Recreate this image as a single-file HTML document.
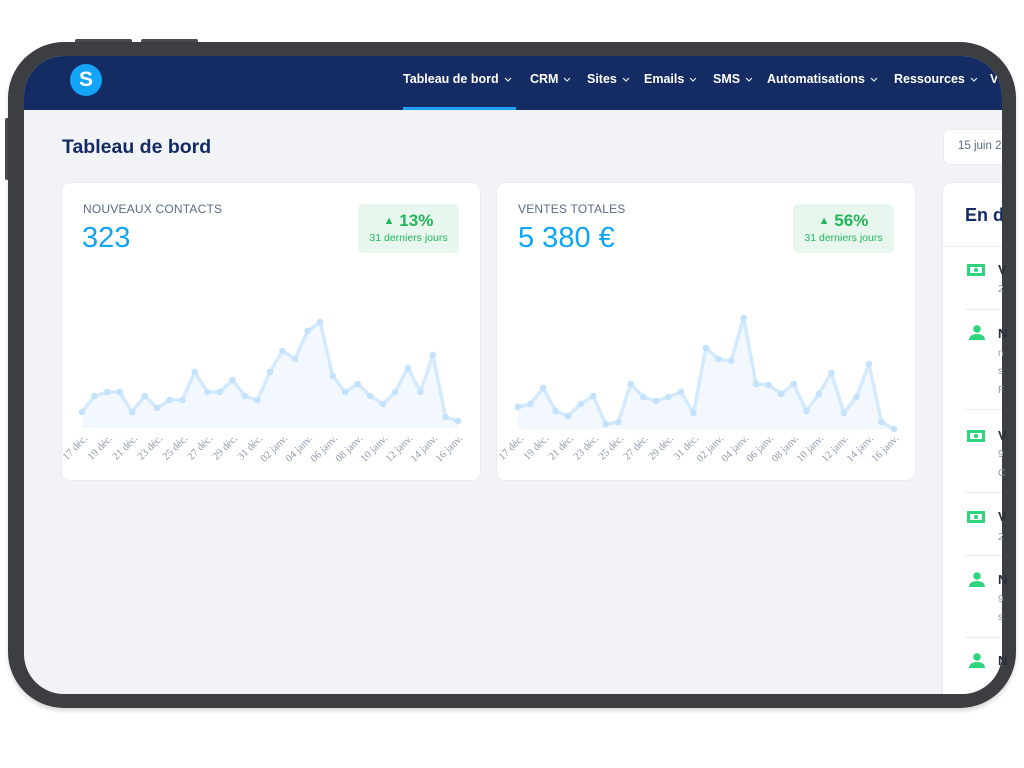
<!DOCTYPE html>
<html><head><meta charset="utf-8"><style>
*{margin:0;padding:0;box-sizing:border-box}
body{width:1024px;height:768px;background:#fff;position:relative;overflow:hidden;font-family:"Liberation Sans",sans-serif}
.a{position:absolute}
.frame{left:8px;top:42px;width:1008px;height:666px;border-radius:56px;background:#3d3e42;box-shadow:0 3px 4px rgba(0,0,0,.15)}
.btn{background:#4a4b4f;border-radius:2px}
.screen{left:24px;top:56px;width:978px;height:638px;border-radius:40px;background:#f1f3f7;overflow:hidden}
.nav{left:0;top:0;width:978px;height:54px;background:#142c63}
.ni{top:16px;color:#fff;font-weight:bold;font-size:12.5px;white-space:nowrap}
.ni svg{margin-left:5px;vertical-align:1px}
.card{background:#fff;border-radius:8px;box-shadow:0 0 0 1px #e8ecf2}
.lbl{font-size:12px;color:#5a6b85;letter-spacing:.2px}
.val{font-size:29px;color:#0ea5f5}
.badge{background:#e8f7ee;border-radius:5px;width:101px;height:49px;text-align:center;color:#22b55a}
.sep{height:1px;background:#e8ecf2;left:0;width:80px}
</style></head><body>
<div class="a btn" style="left:75px;top:39px;width:57px;height:5px"></div>
<div class="a btn" style="left:141px;top:39px;width:57px;height:5px"></div>
<div class="a btn" style="left:5px;top:118px;width:5px;height:62px"></div>
<div class="a frame"></div>
<div class="a screen">
  <div class="a nav">
    <div class="a" style="left:46px;top:8px;width:32px;height:32px;border-radius:50%;background:#12a4f6;color:#fff;font-weight:bold;font-size:21px;text-align:center;line-height:32px">S</div>
    <div class="a ni" style="left:379px">Tableau de bord<svg width="8" height="5"><path d="M1 1l3 3 3-3" fill="none" stroke="#fff" stroke-width="1"/></svg></div>
    <div class="a ni" style="left:506px">CRM<svg width="8" height="5"><path d="M1 1l3 3 3-3" fill="none" stroke="#fff" stroke-width="1"/></svg></div>
    <div class="a ni" style="left:563px">Sites<svg width="8" height="5"><path d="M1 1l3 3 3-3" fill="none" stroke="#fff" stroke-width="1"/></svg></div>
    <div class="a ni" style="left:620px">Emails<svg width="8" height="5"><path d="M1 1l3 3 3-3" fill="none" stroke="#fff" stroke-width="1"/></svg></div>
    <div class="a ni" style="left:689px">SMS<svg width="8" height="5"><path d="M1 1l3 3 3-3" fill="none" stroke="#fff" stroke-width="1"/></svg></div>
    <div class="a ni" style="left:743px">Automatisations<svg width="8" height="5"><path d="M1 1l3 3 3-3" fill="none" stroke="#fff" stroke-width="1"/></svg></div>
    <div class="a ni" style="left:870px">Ressources<svg width="8" height="5"><path d="M1 1l3 3 3-3" fill="none" stroke="#fff" stroke-width="1"/></svg></div>
    <div class="a ni" style="left:966px">V</div>
    <div class="a" style="left:379px;top:51px;width:113px;height:3px;background:#1e9ff9"></div>
  </div>
  <div class="a" style="left:38px;top:80px;font-size:19.5px;font-weight:bold;color:#142c63">Tableau de bord</div>
  <div class="a card" style="left:920px;top:74px;width:80px;height:34px;border-radius:6px"><span class="a" style="left:14px;top:10px;font-size:11.5px;color:#5a6b85">15 juin 2</span></div>
  <div class="a card" style="left:38px;top:127px;width:418px;height:297px"></div>
  <div class="a card" style="left:473px;top:127px;width:418px;height:297px"></div>
  <div class="a card" style="left:919px;top:127px;width:80px;height:520px">
    <div class="a" style="left:22px;top:22px;font-size:18px;font-weight:bold;color:#142c63">En d</div>
    <div class="a sep" style="top:63px"></div>
    <div class="a sep" style="top:126px;left:22px"></div>
    <div class="a sep" style="top:226px;left:22px"></div>
    <div class="a sep" style="top:309px;left:22px"></div>
    <div class="a sep" style="top:372px;left:22px"></div>
    <div class="a sep" style="top:454px;left:22px"></div>
  </div>
  <div class="a lbl" style="left:59px;top:146px">NOUVEAUX CONTACTS</div>
  <div class="a val" style="left:58px;top:166px">323</div>
  <div class="a badge" style="left:334px;top:148px"><div style="font-weight:bold;font-size:17px;margin-top:7px"><span style="font-size:11px;vertical-align:2px">▲</span> 13%</div><div style="font-size:10.5px;margin-top:1px">31 derniers jours</div></div>
  <div class="a lbl" style="left:494px;top:146px">VENTES TOTALES</div>
  <div class="a val" style="left:494px;top:166px">5 380 €</div>
  <div class="a badge" style="left:769px;top:148px"><div style="font-weight:bold;font-size:17px;margin-top:7px"><span style="font-size:11px;vertical-align:2px">▲</span> 56%</div><div style="font-size:10.5px;margin-top:1px">31 derniers jours</div></div>
</div>
<svg class="a" style="left:0;top:0" width="1024" height="768" viewBox="0 0 1024 768">
<defs>
<g id="icm"><rect x="0" y="0" width="18" height="12" fill="#2fd47e"/><rect x="3" y="3" width="12" height="6" fill="#fff"/><circle cx="9" cy="6" r="2.2" fill="#2fd47e"/></g>
<g id="icp"><circle cx="9" cy="4" r="3.8" fill="#2fd47e"/><path d="M1 15c0-4 3.5-6 8-6s8 2 8 6z" fill="#2fd47e"/></g>
</defs>
<use href="#icm" x="967" y="264"/><use href="#icp" x="968" y="325"/><use href="#icm" x="967" y="430"/><use href="#icm" x="967" y="511"/><use href="#icp" x="968" y="572"/><use href="#icp" x="968" y="653"/>
<g fill="#2a2f3a" font-weight="bold" font-size="13"><text x="998" y="274">V</text><text x="998" y="338">N</text><text x="998" y="440">V</text><text x="998" y="521">V</text><text x="998" y="584">N</text><text x="998" y="665">N</text></g>
<g fill="#8d96a8" font-size="10"><text x="998" y="292">2</text><text x="998" y="356">n</text><text x="998" y="374">s</text><text x="998" y="393">F</text><text x="998" y="457">9</text><text x="998" y="476">C</text><text x="998" y="540">2</text><text x="998" y="602">9</text><text x="998" y="620">s</text></g>
<g id="c1">
<polygon fill="#f2f8fe" points="82,428 82,412 94.5,396 107.1,392 119.6,392 132.1,412 144.7,396 157.2,408 169.7,400 182.3,400 194.8,372 207.3,392 219.9,392 232.4,380 244.9,396 257.5,400 270,372 282.5,351 295.1,359 307.6,331 320.1,322 332.7,376 345.2,392 357.7,384 370.3,396 382.8,404 395.3,392 407.9,368 420.4,392 432.9,355 445.5,417 458,421 458,428"/>
<polyline fill="none" stroke="#d3e9fd" stroke-width="3.5" stroke-linejoin="round" points="82,412 94.5,396 107.1,392 119.6,392 132.1,412 144.7,396 157.2,408 169.7,400 182.3,400 194.8,372 207.3,392 219.9,392 232.4,380 244.9,396 257.5,400 270,372 282.5,351 295.1,359 307.6,331 320.1,322 332.7,376 345.2,392 357.7,384 370.3,396 382.8,404 395.3,392 407.9,368 420.4,392 432.9,355 445.5,417 458,421"/>
<g fill="#c4e2fc"><circle cx="82" cy="412" r="3.3"/><circle cx="94.5" cy="396" r="3.3"/><circle cx="107.1" cy="392" r="3.3"/><circle cx="119.6" cy="392" r="3.3"/><circle cx="132.1" cy="412" r="3.3"/><circle cx="144.7" cy="396" r="3.3"/><circle cx="157.2" cy="408" r="3.3"/><circle cx="169.7" cy="400" r="3.3"/><circle cx="182.3" cy="400" r="3.3"/><circle cx="194.8" cy="372" r="3.3"/><circle cx="207.3" cy="392" r="3.3"/><circle cx="219.9" cy="392" r="3.3"/><circle cx="232.4" cy="380" r="3.3"/><circle cx="244.9" cy="396" r="3.3"/><circle cx="257.5" cy="400" r="3.3"/><circle cx="270" cy="372" r="3.3"/><circle cx="282.5" cy="351" r="3.3"/><circle cx="295.1" cy="359" r="3.3"/><circle cx="307.6" cy="331" r="3.3"/><circle cx="320.1" cy="322" r="3.3"/><circle cx="332.7" cy="376" r="3.3"/><circle cx="345.2" cy="392" r="3.3"/><circle cx="357.7" cy="384" r="3.3"/><circle cx="370.3" cy="396" r="3.3"/><circle cx="382.8" cy="404" r="3.3"/><circle cx="395.3" cy="392" r="3.3"/><circle cx="407.9" cy="368" r="3.3"/><circle cx="420.4" cy="392" r="3.3"/><circle cx="432.9" cy="355" r="3.3"/><circle cx="445.5" cy="417" r="3.3"/><circle cx="458" cy="421" r="3.3"/></g>
</g>
<g id="lab" font-family="Liberation Serif,serif" font-size="10.5" fill="#8d96a8" text-anchor="end">
<text x="88" y="439" transform="rotate(-45 88 439)">17 déc.</text>
<text x="113" y="439" transform="rotate(-45 113 439)">19 déc.</text>
<text x="138" y="439" transform="rotate(-45 138 439)">21 déc.</text>
<text x="163" y="439" transform="rotate(-45 163 439)">23 déc.</text>
<text x="188" y="439" transform="rotate(-45 188 439)">25 déc.</text>
<text x="213" y="439" transform="rotate(-45 213 439)">27 déc.</text>
<text x="238" y="439" transform="rotate(-45 238 439)">29 déc.</text>
<text x="263" y="439" transform="rotate(-45 263 439)">31 déc.</text>
<text x="288" y="439" transform="rotate(-45 288 439)">02 janv.</text>
<text x="313" y="439" transform="rotate(-45 313 439)">04 janv.</text>
<text x="338" y="439" transform="rotate(-45 338 439)">06 janv.</text>
<text x="363" y="439" transform="rotate(-45 363 439)">08 janv.</text>
<text x="388" y="439" transform="rotate(-45 388 439)">10 janv.</text>
<text x="413" y="439" transform="rotate(-45 413 439)">12 janv.</text>
<text x="438" y="439" transform="rotate(-45 438 439)">14 janv.</text>
<text x="463" y="439" transform="rotate(-45 463 439)">16 janv.</text>
</g>
<g transform="translate(436,0)">
<use href="#lab"/>
<polygon fill="#f2f8fe" points="82,429 82,407 94.5,404 107.1,388 119.6,411 132.1,416 144.7,404 157.2,396 169.7,424 182.3,422 194.8,384 207.3,397 219.9,401 232.4,397 244.9,392 257.5,413 270,348 282.5,359 295.1,361 307.6,318 320.1,384 332.7,385 345.2,394 357.7,384 370.3,411 382.8,394 395.3,373 407.9,413 420.4,397 432.9,364 445.5,422 458,429"/>
<polyline fill="none" stroke="#d3e9fd" stroke-width="3.5" stroke-linejoin="round" points="82,407 94.5,404 107.1,388 119.6,411 132.1,416 144.7,404 157.2,396 169.7,424 182.3,422 194.8,384 207.3,397 219.9,401 232.4,397 244.9,392 257.5,413 270,348 282.5,359 295.1,361 307.6,318 320.1,384 332.7,385 345.2,394 357.7,384 370.3,411 382.8,394 395.3,373 407.9,413 420.4,397 432.9,364 445.5,422 458,429"/>
<g fill="#c4e2fc"><circle cx="82" cy="407" r="3.3"/><circle cx="94.5" cy="404" r="3.3"/><circle cx="107.1" cy="388" r="3.3"/><circle cx="119.6" cy="411" r="3.3"/><circle cx="132.1" cy="416" r="3.3"/><circle cx="144.7" cy="404" r="3.3"/><circle cx="157.2" cy="396" r="3.3"/><circle cx="169.7" cy="424" r="3.3"/><circle cx="182.3" cy="422" r="3.3"/><circle cx="194.8" cy="384" r="3.3"/><circle cx="207.3" cy="397" r="3.3"/><circle cx="219.9" cy="401" r="3.3"/><circle cx="232.4" cy="397" r="3.3"/><circle cx="244.9" cy="392" r="3.3"/><circle cx="257.5" cy="413" r="3.3"/><circle cx="270" cy="348" r="3.3"/><circle cx="282.5" cy="359" r="3.3"/><circle cx="295.1" cy="361" r="3.3"/><circle cx="307.6" cy="318" r="3.3"/><circle cx="320.1" cy="384" r="3.3"/><circle cx="332.7" cy="385" r="3.3"/><circle cx="345.2" cy="394" r="3.3"/><circle cx="357.7" cy="384" r="3.3"/><circle cx="370.3" cy="411" r="3.3"/><circle cx="382.8" cy="394" r="3.3"/><circle cx="395.3" cy="373" r="3.3"/><circle cx="407.9" cy="413" r="3.3"/><circle cx="420.4" cy="397" r="3.3"/><circle cx="432.9" cy="364" r="3.3"/><circle cx="445.5" cy="422" r="3.3"/><circle cx="458" cy="429" r="3.3"/></g>
</g>
</svg>
</body></html>
